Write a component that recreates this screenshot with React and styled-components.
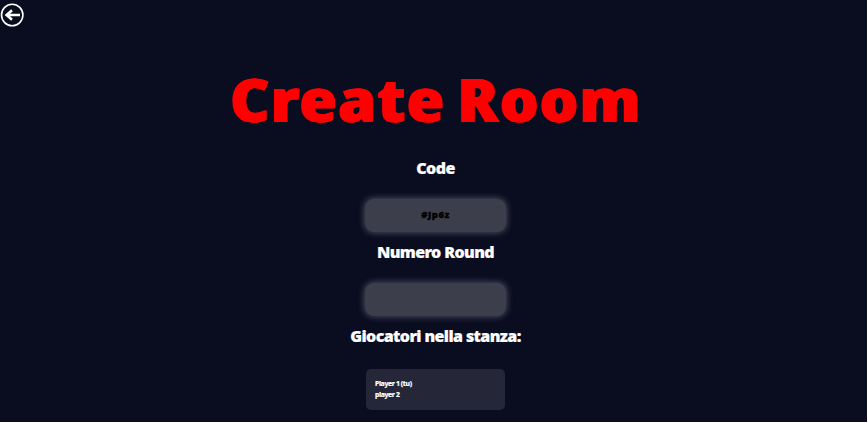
import React from "react";
import styled, { createGlobalStyle } from "styled-components";

const GlobalStyle = createGlobalStyle`
  * { box-sizing: border-box; }
  body { margin: 0; background: #fff; overflow: hidden; }
`;

const Page = styled.main`
  display: flex;
  flex-direction: column;
  align-items: center;
  width: 867px;
  height: 422px;
  padding-left: 4px;
  background: #0a0d1f;
  color: #fff;
  font-family: "Noto Sans", "Open Sans", sans-serif;
  font-weight: 900;
`;

const BackButton = styled.button`
  align-self: flex-start;
  flex: none;
  width: 24px;
  height: 24px;
  margin: 3px 0 0 -4px;
  padding: 0;
  border: 0;
  background: none;
  svg { display: block; }
`;

const Title = styled.h1`
  flex: none;
  height: 80px;
  margin: 32px 0 0;
  font-size: 60.5px;
  line-height: 80px;
  font-weight: 900;
  letter-spacing: 1.4px;
  word-spacing: -5px;
  text-indent: 1px;
  white-space: nowrap;
  color: #f00;
  text-shadow: 1px 0 #f00, -1px 0 #f00;
`;

const Heading = styled.h2`
  flex: none;
  height: 24px;
  margin: ${(p) => p.$top}px 0 0;
  font-size: 16px;
  line-height: 24px;
  font-weight: 900;
  letter-spacing: -0.6px;
  white-space: nowrap;
  -webkit-text-stroke: 0.2px #fff;
`;

const Field = styled.input`
  flex: none;
  width: 141px;
  height: 33px;
  margin-top: ${(p) => p.$top}px;
  padding: 0 0 3px;
  border: 0;
  border-radius: 9px;
  outline: 0;
  background: #3d3e4c;
  box-shadow: 0 0 6px 1px rgba(110, 108, 130, 0.65);
  color: #000;
  font: 900 9.5px "Noto Sans", "Open Sans", sans-serif;
  letter-spacing: 0.5px;
  text-align: center;
  -webkit-text-stroke: 0.3px #000;
`;

const PlayerList = styled.ul`
  flex: none;
  width: 139px;
  height: 41px;
  margin: 21px 0 0;
  padding: 9px 9px;
  border-radius: 5px;
  background: #252637;
  list-style: none;
  font-size: 6.8px;
  line-height: 11px;
  font-weight: 800;
  letter-spacing: -0.37px;
  -webkit-text-stroke: 0.15px #fff;
`;

export default function App() {
  return (
    <>
      <GlobalStyle />
      <Page>
        <BackButton aria-label="Back">
          <svg width="24" height="24" viewBox="0 0 24 24" fill="none" stroke="#fff">
            <circle cx="12.2" cy="12" r="10.7" strokeWidth="1.6" />
            <path d="M20 12H7M12 7.2L6.6 12l5.4 4.8" strokeWidth="2.6" />
          </svg>
        </BackButton>
        <Title>Create Room</Title>
        <Heading $top={17}>Code</Heading>
        <Field $top={19} defaultValue="#Jp6z" />
        <Heading $top={8}>Numero Round</Heading>
        <Field $top={19} />
        <Heading $top={8}>Giocatori nella stanza:</Heading>
        <PlayerList>
          <li>Player 1 (tu)</li>
          <li>player 2</li>
        </PlayerList>
      </Page>
    </>
  );
}
